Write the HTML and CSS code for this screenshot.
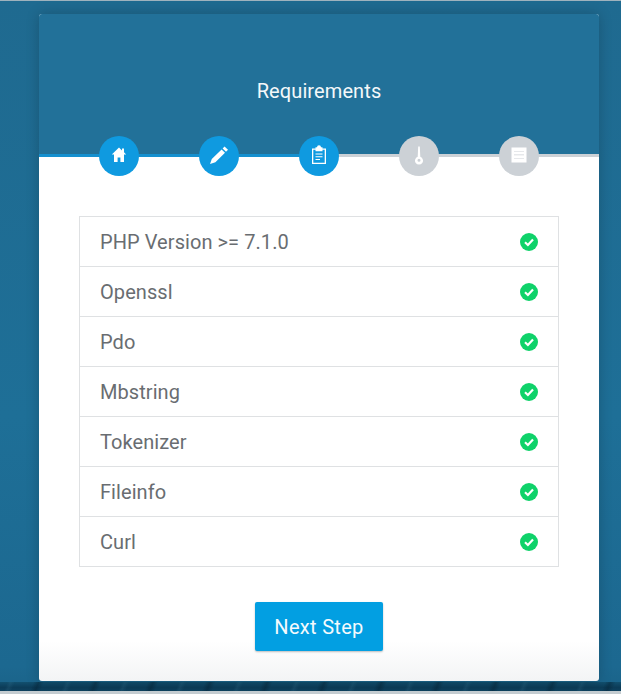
FILE: index.html
```html
<!DOCTYPE html>
<html lang="en">
<head>
<meta charset="utf-8">
<title>Requirements</title>
<link rel="stylesheet" href="styles.css">
</head>
<body>
<main class="card">
  <header class="card-header">
    <h1 class="title">Requirements</h1>
    <ul class="steps">
      <li class="step active">
        <svg viewBox="0 0 20 20" class="icon-lg" aria-hidden="true"><path fill="#fff" d="M10 2.500 2.800 9.400h2.200V17h3.600v-4.400h2.800V17H15V9.400h2.200L15 7.300V3.600h-2v1.800z"/></svg>
      </li>
      <li class="step active">
        <svg viewBox="0 0 20 20" class="icon-lg" aria-hidden="true"><path fill="#fff" d="M15.500 1.500 19 4.800l-2 2-3.400-3.400zM12.600 4.400 16 7.800 6.400 17.300 1 19l1.800-5.100z"/></svg>
      </li>
      <li class="step active">
        <svg viewBox="0 0 20 20" class="icon-lg" aria-hidden="true"><path fill="#fff" fill-rule="evenodd" d="M8 2.200a2 2 0 0 1 4 0h1.500v1.300H17V19H3V3.500h3.500V2.200zM4.300 4.800v12.900h11.400V4.800h-2.200v1.500h-7V4.800zM6.500 8.500h7v1.100h-7zm0 2.700h7v1.100h-7zm0 2.700h4.500V15H6.500z"/></svg>
      </li>
      <li class="step">
        <svg viewBox="0 0 20 20" class="icon-lg" aria-hidden="true"><path fill="#fff" fill-rule="evenodd" d="M9.200 1.500h1.600l.5 10.300a4 4 0 1 1-2.600 0zM10 13.800a1.500 1.500 0 1 0 0 3 1.500 1.500 0 0 0 0-3z"/></svg>
      </li>
      <li class="step">
        <svg viewBox="0 0 20 20" class="icon-lg" aria-hidden="true"><path fill="#fff" fill-rule="evenodd" d="M2.500 2.500h15v15h-15zM5 6v.6h10V6zm0 3.600v.6h10v-.6zm0 3.600v.6h10v-.6z"/></svg>
      </li>
    </ul>
  </header>
  <section class="card-body">
    <ul class="req-list">
      <li class="req"><span>PHP Version &gt;= 7.1.0</span><svg class="check" viewBox="0 0 18 18" aria-hidden="true"><circle cx="9" cy="9" r="9" fill="#0fd26a"/><path d="M5 9.300 7.900 12 13 6.500" fill="none" stroke="#fff" stroke-width="2.200"/></svg></li>
      <li class="req"><span>Openssl</span><svg class="check" viewBox="0 0 18 18" aria-hidden="true"><circle cx="9" cy="9" r="9" fill="#0fd26a"/><path d="M5 9.300 7.900 12 13 6.500" fill="none" stroke="#fff" stroke-width="2.200"/></svg></li>
      <li class="req"><span>Pdo</span><svg class="check" viewBox="0 0 18 18" aria-hidden="true"><circle cx="9" cy="9" r="9" fill="#0fd26a"/><path d="M5 9.300 7.900 12 13 6.500" fill="none" stroke="#fff" stroke-width="2.200"/></svg></li>
      <li class="req"><span>Mbstring</span><svg class="check" viewBox="0 0 18 18" aria-hidden="true"><circle cx="9" cy="9" r="9" fill="#0fd26a"/><path d="M5 9.300 7.900 12 13 6.500" fill="none" stroke="#fff" stroke-width="2.200"/></svg></li>
      <li class="req"><span>Tokenizer</span><svg class="check" viewBox="0 0 18 18" aria-hidden="true"><circle cx="9" cy="9" r="9" fill="#0fd26a"/><path d="M5 9.300 7.900 12 13 6.500" fill="none" stroke="#fff" stroke-width="2.200"/></svg></li>
      <li class="req"><span>Fileinfo</span><svg class="check" viewBox="0 0 18 18" aria-hidden="true"><circle cx="9" cy="9" r="9" fill="#0fd26a"/><path d="M5 9.300 7.900 12 13 6.500" fill="none" stroke="#fff" stroke-width="2.200"/></svg></li>
      <li class="req"><span>Curl</span><svg class="check" viewBox="0 0 18 18" aria-hidden="true"><circle cx="9" cy="9" r="9" fill="#0fd26a"/><path d="M5 9.300 7.900 12 13 6.500" fill="none" stroke="#fff" stroke-width="2.200"/></svg></li>
    </ul>
    <div class="actions"><button class="next" type="button">Next Step</button></div>
  </section>
</main>
</body>
</html>
```

FILE: styles.css
```css
* { box-sizing: border-box; }
html, body { margin: 0; height: 694px; overflow: hidden; }
body {
  padding: 13px 22px 0 39px;
  font-family: Roboto, "Liberation Sans", sans-serif;
  border-top: 1px solid #9fb2bd;
  border-bottom: 3px solid #c4ccd0;
  background-color: #1e6c93;
  background-image:
    repeating-linear-gradient(112deg, transparent 0 7px, rgba(70, 130, 160, .16) 10px, transparent 14px 31px, rgba(2, 25, 40, .35) 36px, transparent 41px 53px),
    linear-gradient(to bottom, #12506f 0%, #0c3c58 45%, #0f4563 100%),
    linear-gradient(to bottom, #1f6a90 0%, #1e6f97 60%, #1c6890 96%, #1a6287 100%);
  background-size: 100% 12px, 100% 12px, 100% 100%;
  background-position: left bottom, left bottom, left top;
  background-repeat: no-repeat;
}
.card {
  width: 560px;
  height: 667px;
  border-radius: 3px;
  box-shadow: 0 0 14px rgba(0, 0, 0, .2);
  background: linear-gradient(to bottom, #fff 94%, #f3f4f5 100%);
}
.card-header {
  position: relative;
  height: 143px;
  padding-top: 65px;
  border-radius: 3px 3px 0 0;
  background: #227199;
  border-bottom: 3px solid #ccd1d6;
}
.card-header::after {
  content: "";
  position: absolute;
  left: 0;
  bottom: -3px;
  width: 280px;
  height: 3px;
  background: #1590cf;
}
.title {
  margin: 0;
  font-size: 20px;
  font-weight: 400;
  line-height: 24px;
  letter-spacing: .1px;
  text-align: center;
  color: #f4f8fa;
}
.steps {
  position: absolute;
  z-index: 1;
  left: 60px;
  top: 122px;
  display: flex;
  gap: 60px;
  margin: 0;
  padding: 0;
  list-style: none;
}
.step {
  display: flex;
  align-items: center;
  justify-content: center;
  width: 40px;
  height: 40px;
  border-radius: 50%;
  background: #ccd1d6;
}
.step.active { background: #0f9ae0; }
.icon-lg { width: 20px; height: 20px; margin-bottom: 2px; }
.card-body { padding: 59px 40px 0; }
.req-list {
  margin: 0;
  padding: 0;
  list-style: none;
  border: 1px solid #dfe1e3;
}
.req {
  display: flex;
  align-items: center;
  justify-content: space-between;
  height: 50px;
  padding: 0 20px;
  font-size: 20px;
  font-weight: 400;
  letter-spacing: .07px;
  color: #696d71;
  border-bottom: 1px solid #dfe1e3;
}
.req:last-child { height: 49px; border-bottom: 0; }
.check { width: 18px; height: 18px; }
.actions { display: flex; justify-content: center; margin-top: 35px; }
.next {
  width: 128px;
  height: 49px;
  padding: 0;
  border: 0;
  border-radius: 2px;
  font: 400 20px Roboto, "Liberation Sans", sans-serif;
  letter-spacing: .3px;
  color: #f4fafd;
  background: #029fe2;
  box-shadow: 0 1px 2px rgba(0, 0, 0, .25);
}
```
